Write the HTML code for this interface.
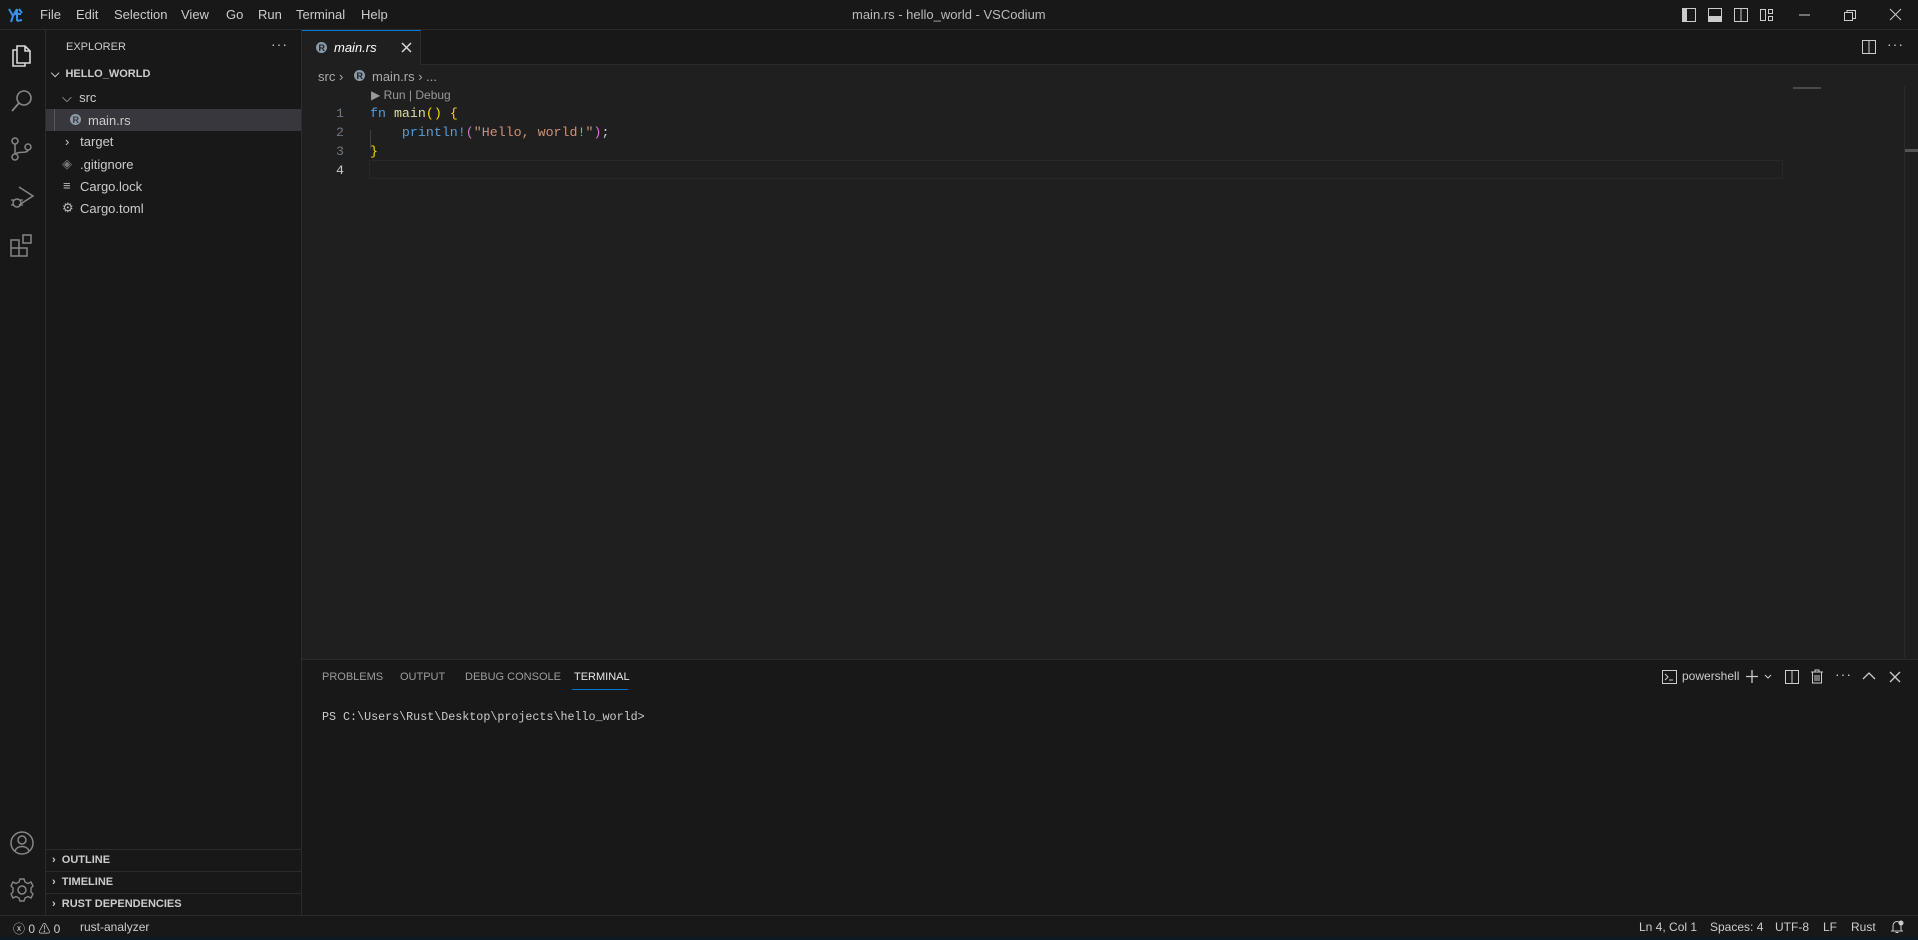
<!DOCTYPE html>
<html><head><meta charset="utf-8"><style>
*{box-sizing:border-box;margin:0;padding:0}
body{width:1918px;height:940px;background:#1f1f1f;font-family:"Liberation Sans",sans-serif;font-size:13px;color:#cccccc;position:relative;overflow:hidden}
.a{position:absolute;white-space:nowrap}
.mono{font-family:"Liberation Mono",monospace}
svg{position:absolute}
</style></head><body>
<!-- title bar -->
<div class="a" style="left:0;top:0;width:1918px;height:30px;background:#181818;border-bottom:1px solid #2b2b2b"></div>
<svg style="left:7px;top:6px" width="18" height="18" viewBox="0 0 18 18"><path d="M2 3 L6 10 L4 16 M6 10 L10 3 M10 3 V15 M8 8 H14 M12 3 L15 7 M10 15 L15 14" stroke="#3b8eea" stroke-width="2" fill="none"/></svg>
<div class="a" style="top:7px;left:40px">File</div>
<div class="a" style="top:7px;left:76px">Edit</div>
<div class="a" style="top:7px;left:114px">Selection</div>
<div class="a" style="top:7px;left:181px">View</div>
<div class="a" style="top:7px;left:226px">Go</div>
<div class="a" style="top:7px;left:258px">Run</div>
<div class="a" style="top:7px;left:296px">Terminal</div>
<div class="a" style="top:7px;left:361px">Help</div>
<div class="a" style="top:7px;left:852px;color:#bbb">main.rs - hello_world - VSCodium</div>
<svg style="left:1682px;top:8px" width="14" height="14"><rect x="0.5" y="0.5" width="13" height="13" fill="none" stroke="#ccc"/><rect x="1" y="1" width="4" height="12" fill="#ccc"/></svg>
<svg style="left:1708px;top:8px" width="14" height="14"><rect x="0.5" y="0.5" width="13" height="13" fill="none" stroke="#ccc"/><rect x="1" y="8" width="12" height="5" fill="#ccc"/></svg>
<svg style="left:1734px;top:8px" width="14" height="14"><rect x="0.5" y="0.5" width="13" height="13" fill="none" stroke="#ccc"/><line x1="7" y1="0" x2="7" y2="14" stroke="#ccc"/></svg>
<svg style="left:1760px;top:8px" width="14" height="14"><rect x="0.5" y="1.5" width="5" height="11" fill="none" stroke="#ccc"/><rect x="8.5" y="1.5" width="4" height="4" fill="none" stroke="#ccc"/><rect x="8.5" y="8.5" width="4" height="4" fill="none" stroke="#ccc"/></svg>
<svg style="left:1798px;top:8px" width="14" height="14"><line x1="1" y1="7" x2="12" y2="7" stroke="#ccc"/></svg>
<svg style="left:1843px;top:8px" width="14" height="14"><rect x="1.5" y="4.5" width="8" height="8" fill="none" stroke="#ccc"/><path d="M4 4.5V2.5H12.5V10.5H9.5" fill="none" stroke="#ccc"/></svg>
<svg style="left:1889px;top:8px" width="14" height="14"><path d="M1 1L12 12M12 1L1 12" stroke="#ccc"/></svg>
<!-- activity bar -->
<div class="a" style="left:0;top:30px;width:46px;height:885px;background:#181818;border-right:1px solid #2b2b2b"></div>
<svg style="left:9px;top:41px" width="26" height="26" viewBox="0 0 26 26"><path d="M8 5H16L21 10V22H8Z M16 5V10H21" fill="none" stroke="#d7d7d7" stroke-width="1.6"/><path d="M8 9H4V25H16V22" fill="none" stroke="#d7d7d7" stroke-width="1.6"/></svg>
<svg style="left:9px;top:88px" width="26" height="26" viewBox="0 0 26 26"><circle cx="15" cy="10" r="7" fill="none" stroke="#868686" stroke-width="1.6"/><path d="M10 15L3 23" stroke="#868686" stroke-width="1.8"/></svg>
<svg style="left:9px;top:136px" width="26" height="26" viewBox="0 0 26 26"><circle cx="6" cy="5" r="3" fill="none" stroke="#868686" stroke-width="1.5"/><circle cx="6" cy="21" r="3" fill="none" stroke="#868686" stroke-width="1.5"/><circle cx="19" cy="11" r="3" fill="none" stroke="#868686" stroke-width="1.5"/><path d="M6 8V18M19 14C19 18 8 15 7 18" fill="none" stroke="#868686" stroke-width="1.5"/></svg>
<svg style="left:9px;top:184px" width="26" height="26" viewBox="0 0 26 26"><path d="M10 3L24 12L10 21" fill="none" stroke="#868686" stroke-width="1.5"/><circle cx="8" cy="19" r="4" fill="none" stroke="#868686" stroke-width="1.5"/><path d="M2 16H5M2 21H5M11 16H14M11 21H14" stroke="#868686" stroke-width="1.3"/></svg>
<svg style="left:9px;top:232px" width="26" height="26" viewBox="0 0 26 26"><path d="M2 8H10V16H18V24H2Z M10 16V24 M2 16H10" fill="none" stroke="#868686" stroke-width="1.5"/><rect x="14" y="3" width="8" height="8" fill="none" stroke="#868686" stroke-width="1.5"/></svg>
<svg style="left:9px;top:830px" width="26" height="26" viewBox="0 0 26 26"><circle cx="13" cy="13" r="11" fill="none" stroke="#868686" stroke-width="1.5"/><circle cx="13" cy="10" r="4" fill="none" stroke="#868686" stroke-width="1.5"/><path d="M6 21C8 15 18 15 20 21" fill="none" stroke="#868686" stroke-width="1.5"/></svg>
<svg style="left:9px;top:877px" width="26" height="26" viewBox="0 0 26 26"><circle cx="13" cy="13" r="4" fill="none" stroke="#868686" stroke-width="1.5"/><path d="M11 2H15L16 5L19 6.5L22 5L24 9L22 11V15L24 17L22 21L19 19.5L16 21L15 24H11L10 21L7 19.5L4 21L2 17L4 15V11L2 9L4 5L7 6.5L10 5Z" fill="none" stroke="#868686" stroke-width="1.4"/></svg>
<!-- sidebar -->
<div class="a" style="left:46px;top:30px;width:256px;height:885px;background:#181818;border-right:1px solid #2b2b2b"></div>
<div class="a" style="left:66px;top:41px;font-size:11px">EXPLORER</div>
<div class="a" style="left:271px;top:36px;font-size:14px;letter-spacing:1px">···</div>
<div class="a" style="left:51px;top:68px;font-size:11px;font-weight:bold">⌵&nbsp; HELLO_WORLD</div>
<div class="a" style="left:46px;top:109px;width:255px;height:22px;background:#37373d"></div>
<div class="a" style="left:54px;top:109px;width:1px;height:22px;background:#585858"></div>
<div class="a" style="left:62px;top:90px">⌵&nbsp; src</div>
<svg style="left:69px;top:113px" width="13" height="13"><circle cx="6.5" cy="6.5" r="5.5" fill="#8a9aa8"/><text x="3.5" y="10" font-size="9" font-family="Liberation Sans" fill="#37373d" font-weight="bold">R</text></svg>
<div class="a" style="left:88px;top:113px">main.rs</div>
<div class="a" style="left:65px;top:134px">›&nbsp;&nbsp; target</div>
<div class="a" style="left:62px;top:156px;color:#777">◈</div>
<div class="a" style="left:80px;top:157px">.gitignore</div>
<div class="a" style="left:63px;top:178px;color:#bbb">≡</div>
<div class="a" style="left:80px;top:179px">Cargo.lock</div>
<div class="a" style="left:62px;top:200px;color:#bbb">⚙</div>
<div class="a" style="left:80px;top:201px">Cargo.toml</div>
<div class="a" style="left:46px;top:849px;width:255px;height:1px;background:#2b2b2b"></div>
<div class="a" style="left:46px;top:871px;width:255px;height:1px;background:#2b2b2b"></div>
<div class="a" style="left:46px;top:893px;width:255px;height:1px;background:#2b2b2b"></div>
<div class="a" style="left:52px;top:854px;font-size:11px;font-weight:bold">›&nbsp;&nbsp;OUTLINE</div>
<div class="a" style="left:52px;top:876px;font-size:11px;font-weight:bold">›&nbsp;&nbsp;TIMELINE</div>
<div class="a" style="left:52px;top:898px;font-size:11px;font-weight:bold">›&nbsp;&nbsp;RUST DEPENDENCIES</div>
<!-- tabs -->
<div class="a" style="left:302px;top:30px;width:1616px;height:35px;background:#181818;border-bottom:1px solid #2b2b2b"></div>
<div class="a" style="left:302px;top:30px;width:119px;height:35px;background:#1f1f1f;border-top:1px solid #0078d4;border-right:1px solid #2b2b2b"></div>
<svg style="left:315px;top:41px" width="13" height="13"><circle cx="6.5" cy="6.5" r="5.5" fill="#8a9aa8"/><text x="3.5" y="10" font-size="9" font-family="Liberation Sans" fill="#1f1f1f" font-weight="bold">R</text></svg>
<div class="a" style="left:334px;top:40px;font-style:italic;color:#fff">main.rs</div>
<svg style="left:401px;top:42px" width="11" height="11"><path d="M1 1L10 10M10 1L1 10" stroke="#ddd" stroke-width="1.4"/></svg>
<svg style="left:1862px;top:40px" width="14" height="14"><rect x="0.5" y="0.5" width="13" height="13" fill="none" stroke="#ccc"/><line x1="7" y1="0" x2="7" y2="14" stroke="#ccc"/></svg>
<div class="a" style="left:1887px;top:36px;font-size:14px;letter-spacing:1px">···</div>
<!-- breadcrumb -->
<div class="a" style="left:318px;top:69px;color:#aaa">src ›</div>
<svg style="left:353px;top:69px" width="13" height="13"><circle cx="6.5" cy="6.5" r="5.5" fill="#8a9aa8"/><text x="3.5" y="10" font-size="9" font-family="Liberation Sans" fill="#1f1f1f" font-weight="bold">R</text></svg>
<div class="a" style="left:372px;top:69px;color:#aaa">main.rs › ...</div>
<!-- code -->
<div class="a" style="left:371px;top:88px;font-size:12px;color:#999">▶ Run | Debug</div>
<div class="a" style="left:369px;top:160px;width:1414px;height:19px;border:1px solid #282828"></div>
<div class="a" style="left:370px;top:130px;width:1px;height:19px;background:#404040"></div>
<div class="a mono" style="left:320px;top:104px;font-size:13.3px;line-height:19px;color:#6e7681;text-align:right;width:24px">1<br>2<br>3<br><span style="color:#ccc">4</span></div>
<div class="a mono" style="left:370px;top:104px;font-size:13.3px;line-height:19px;white-space:pre"><span style="color:#569cd6">fn</span> <span style="color:#dcdcaa">main</span><span style="color:#ffd700">()</span> <span style="color:#ffd700">{</span>
    <span style="color:#569cd6">println!</span><span style="color:#da70d6">(</span><span style="color:#ce9178">"Hello, world!"</span><span style="color:#da70d6">)</span>;
<span style="color:#ffd700">}</span></div>
<div class="a" style="left:1904px;top:86px;width:14px;height:572px;border-left:1px solid #2b2b2b"></div>
<div class="a" style="left:1905px;top:149px;width:13px;height:3px;background:#555"></div>
<div class="a" style="left:1793px;top:87px;width:28px;height:2px;background:#666;opacity:.6"></div>
<!-- panel -->
<div class="a" style="left:302px;top:659px;width:1616px;height:256px;background:#181818;border-top:1px solid #2b2b2b"></div>
<div class="a" style="left:322px;top:671px;font-size:11px;color:#9d9d9d">PROBLEMS</div>
<div class="a" style="left:400px;top:671px;font-size:11px;color:#9d9d9d">OUTPUT</div>
<div class="a" style="left:465px;top:671px;font-size:11px;color:#9d9d9d">DEBUG CONSOLE</div>
<div class="a" style="left:574px;top:671px;font-size:11px;color:#e7e7e7">TERMINAL</div>
<div class="a" style="left:572px;top:689px;width:56px;height:1px;background:#0078d4"></div>
<div class="a mono" style="left:322px;top:710px;font-size:11.7px;color:#ccc">PS C:\Users\Rust\Desktop\projects\hello_world&gt;</div>
<svg style="left:1662px;top:670px" width="15" height="14"><rect x="0.5" y="0.5" width="14" height="13" fill="none" stroke="#ccc"/><path d="M3 4L6 7L3 10M7 10H11" stroke="#ccc" fill="none"/></svg>
<div class="a" style="left:1682px;top:669px;font-size:12px">powershell</div>
<svg style="left:1745px;top:669px" width="30" height="16"><path d="M7 1V14M1 7.5H13" stroke="#ccc" stroke-width="1.3"/><path d="M20 6L23 9L26 6" stroke="#ccc" fill="none"/></svg>
<svg style="left:1785px;top:670px" width="14" height="14"><rect x="0.5" y="0.5" width="13" height="13" fill="none" stroke="#ccc"/><line x1="7" y1="0" x2="7" y2="14" stroke="#ccc"/></svg>
<svg style="left:1810px;top:669px" width="14" height="15"><path d="M1 3H13M5 3V1H9V3M2.5 3.5V14H11.5V3.5M5 6V12M7 6V12M9 6V12" stroke="#ccc" fill="none"/></svg>
<div class="a" style="left:1835px;top:666px;font-size:14px;letter-spacing:1px">···</div>
<svg style="left:1862px;top:671px" width="14" height="10"><path d="M1 8L7 2L13 8" stroke="#ccc" fill="none" stroke-width="1.3"/></svg>
<svg style="left:1889px;top:671px" width="12" height="12"><path d="M1 1L11 11M11 1L1 11" stroke="#ccc" stroke-width="1.3"/></svg>
<!-- status bar -->
<div class="a" style="left:0;top:915px;width:1918px;height:25px;background:#181818;border-top:1px solid #2b2b2b"></div>
<div class="a" style="left:0;top:937px;width:1918px;height:3px;background:#0b1a24"></div>
<div class="a" style="left:13px;top:920px;font-size:12px">ⓧ 0 ⚠ 0</div>
<div class="a" style="left:80px;top:920px;font-size:12px">rust-analyzer</div>
<div class="a" style="left:1639px;top:920px;font-size:12px">Ln 4, Col 1</div>
<div class="a" style="left:1710px;top:920px;font-size:12px">Spaces: 4</div>
<div class="a" style="left:1775px;top:920px;font-size:12px">UTF-8</div>
<div class="a" style="left:1823px;top:920px;font-size:12px">LF</div>
<div class="a" style="left:1851px;top:920px;font-size:12px">Rust</div>
<svg style="left:1890px;top:920px" width="14" height="14"><path d="M3 11V6C3 3 5 1.5 7 1.5C9 1.5 11 3 11 6V11H13H1Z M5.5 12.5H8.5" stroke="#ccc" fill="none"/><circle cx="11" cy="3" r="2.5" fill="#ccc"/></svg>
</body></html>
